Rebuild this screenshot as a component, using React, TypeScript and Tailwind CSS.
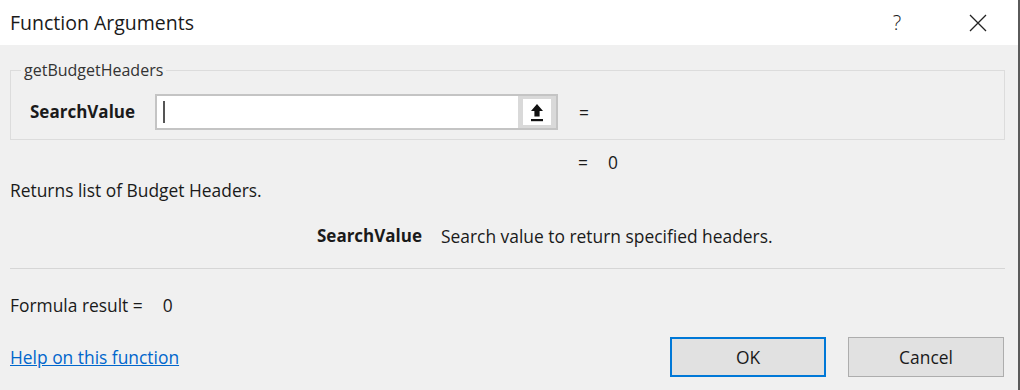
import React from 'react';

const font = { fontFamily: '"Open Sans", "Noto Sans", sans-serif' };

export default function App() {
  return (
    <div
      className="w-[1020px] h-[390px] bg-[#f0f0f0] border-r-2 border-[#5a5a5a] flex flex-col text-[#1a1a1a] overflow-hidden"
      style={font}
    >
      {/* Title bar */}
      <div className="h-[45px] bg-white flex items-center justify-between pl-[10px] shrink-0">
        <span className="text-[19.5px] leading-none">Function Arguments</span>
        <div className="flex items-center h-full">
          <span className="w-[82px] text-center text-[20px] font-light">?</span>
          <span className="w-[80px] flex justify-center">
            <svg width="18" height="18" viewBox="0 0 18 18" fill="none" stroke="#222" strokeWidth="1.3">
              <path d="M1 1 L17 17 M17 1 L1 17" />
            </svg>
          </span>
        </div>
      </div>

      <div className="pl-[10px] pr-[13px] flex flex-col text-[17.4px] leading-[24px]">
        {/* Group box */}
        <fieldset className="mt-[15px] border border-[#dcdcdc] h-[80px] px-[10px] pt-[14px]">
          <legend className="px-[3px] text-[16px] leading-[20px] text-[#333]">getBudgetHeaders</legend>
          <div className="flex items-center h-[36px] pl-[9px]">
            <span className="w-[125px] font-bold text-[17px]">SearchValue</span>
            <div className="w-[403px] h-[36px] flex border-2 border-[#c4c4c4] bg-white">
              <div className="flex-1 flex items-center pl-[6px]">
                <div className="w-[2px] h-[22px] bg-[#555]" />
              </div>
              <div className="w-[38px] bg-[#d9d9d9] flex items-center justify-center">
                <div className="w-[28px] h-[26px] bg-white flex items-center justify-center">
                  <svg width="14" height="19" viewBox="0 0 14 19">
                    <path d="M7 1 L13 8 L9.6 8 L9.6 13.5 L4.4 13.5 L4.4 8 L1 8 Z" fill="#111" />
                    <rect x="1" y="16" width="12" height="2.2" fill="#111" />
                  </svg>
                </div>
              </div>
            </div>
            <span className="ml-[21px]">=</span>
          </div>
        </fieldset>

        {/* Current value */}
        <div className="mt-[10px] h-[24px] flex items-center pl-[568px]">
          <span>=</span>
          <span className="ml-[20px]">0</span>
        </div>

        <div className="mt-[4px] h-[24px]">Returns list of Budget Headers.</div>

        <div className="mt-[22px] h-[24px] flex items-center">
          <span className="w-[412px] text-right font-bold text-[17px]">SearchValue</span>
          <span className="ml-[19px]">Search value to return specified headers.</span>
        </div>

        <div className="mt-[20px] h-px bg-[#d6d6d6]" />

        <div className="mt-[24px] h-[24px] flex items-center">
          <span>Formula result =</span>
          <span className="ml-[20px]">0</span>
        </div>

        <div className="mt-[20px] flex items-center justify-between">
          <a className="text-[#0066cc] underline" href="#">Help on this function</a>
          <div className="flex gap-[22px] pr-[1px]">
            <button className="w-[156px] h-[40px] bg-[#e1e1e1] border-2 border-[#0078d7]">OK</button>
            <button className="w-[156px] h-[40px] bg-[#e1e1e1] border border-[#adadad]">Cancel</button>
          </div>
        </div>
      </div>
    </div>
  );
}
